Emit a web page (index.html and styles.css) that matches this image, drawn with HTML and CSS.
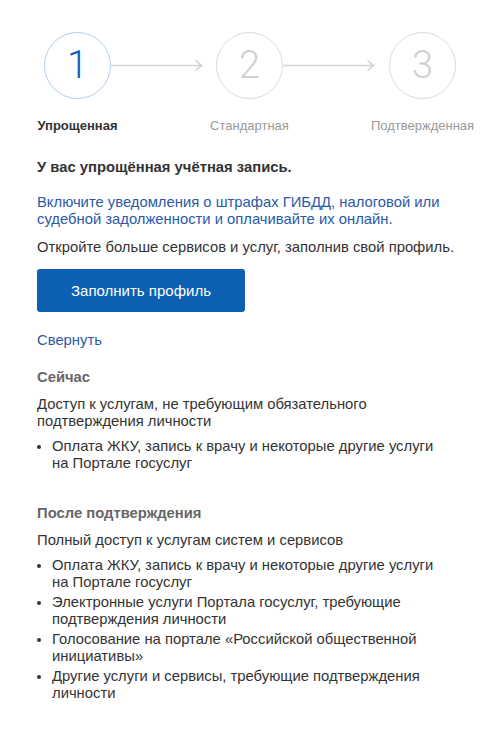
FILE: index.html
```
<!DOCTYPE html>
<html lang="ru">
<head>
    <meta charset="UTF-8">
    <title>Учётная запись</title>
    <link rel="stylesheet" href="styles.css">
</head>
<body>
<section class="wrap">
    <div class="steps">
        <div class="step active">
            <span class="circle">1</span>
            <span class="label">Упрощенная</span>
        </div>
        <svg class="arrow" width="105" height="12" viewBox="0 0 105 12">
            <path d="M0 6.5H90M84.5 1.5L90.5 6.5L84.5 11.5" fill="none" stroke="#d3d3d3" stroke-width="1.6"/>
        </svg>
        <div class="step">
            <span class="circle">2</span>
            <span class="label">Стандартная</span>
        </div>
        <svg class="arrow" width="106" height="12" viewBox="0 0 106 12">
            <path d="M0 6.5H90M84.5 1.5L90.5 6.5L84.5 11.5" fill="none" stroke="#d3d3d3" stroke-width="1.6"/>
        </svg>
        <div class="step">
            <span class="circle">3</span>
            <span class="label">Подтвержденная</span>
        </div>
    </div>

    <div class="content">
        <h2 class="title">У вас упрощённая учётная запись.</h2>
        <p class="notice"><a href="javascript:;">Включите уведомления о штрафах ГИБДД, налоговой или судебной задолженности и оплачивайте их онлайн.</a></p>
        <p class="more">Откройте больше сервисов и услуг, заполнив свой профиль.</p>
        <a href="javascript:;" class="btn">Заполнить профиль</a>
        <a href="javascript:;" class="toggle">Свернуть</a>

        <h3 class="sub">Сейчас</h3>
        <p>Доступ к услугам, не требующим обязательного подтверждения личности</p>
        <ul class="list">
            <li>Оплата ЖКУ, запись к врачу и некоторые другие услуги<br>на Портале госуслуг</li>
        </ul>

        <h3 class="sub later">После подтверждения</h3>
        <p>Полный доступ к услугам систем и сервисов</p>
        <ul class="list">
            <li>Оплата ЖКУ, запись к врачу и некоторые другие услуги<br>на Портале госуслуг</li>
            <li>Электронные услуги Портала госуслуг, требующие подтверждения личности</li>
            <li>Голосование на портале «Российской общественной инициативы»</li>
            <li>Другие услуги и сервисы, требующие подтверждения личности</li>
        </ul>
    </div>
</section>
</body>
</html>
```

FILE: styles.css
```
html,body{ height:100%; }
body,h2,h3,p,ul{ margin:0; padding:0; }
body{
    background:#fff;
    color:#333;
    font-family:"Liberation Sans", Arial, sans-serif;
    font-size:14.8px;
    line-height:17px;
}
a{ color:#2b59a9; text-decoration:none; }

/* шаги */
.steps{
    display:flex;
    align-items:flex-start;
    padding:32px 0 0 44px;
}
.steps .step{
    width:67px;
    display:flex;
    flex-direction:column;
    align-items:center;
}
.steps .circle{
    box-sizing:border-box;
    width:67px;
    height:67px;
    border:1px solid #dcdcdc;
    border-radius:50%;
    display:flex;
    align-items:center;
    justify-content:center;
    font-family:Roboto, "Liberation Sans", sans-serif;
    font-weight:300;
    font-size:38px;
    color:#d0d0d0;
}
.steps .label{
    margin-top:19px;
    white-space:nowrap;
    font-size:13px;
    line-height:16px;
    color:#999;
}
.steps .active .circle{
    border-color:#b3cfe9;
    color:#0d5eb0;
}
.steps .active .label{
    color:#333;
    font-weight:bold;
}
.steps .arrow{
    flex:none;
    margin-top:27px;
}

/* текст */
.content{
    width:421px;
    padding:25px 0 40px 37px;
}
.content .title{
    font-size:14.8px;
    font-weight:bold;
    line-height:17px;
}
.content .notice{ margin-top:18px; }
.content .more{ margin-top:11px; }
.content .btn{
    display:flex;
    align-items:center;
    justify-content:center;
    width:208px;
    height:43px;
    margin-top:13px;
    border-radius:3px;
    background:#0d5fb1;
    color:#fff;
    font-size:15px;
}
.content .toggle{
    display:block;
    width:max-content;
    margin:20px 0 20px;
}
.content .sub{
    font-size:14.8px;
    font-weight:bold;
    line-height:17px;
    color:#666;
    margin-bottom:10px;
}
.content .sub.later{ margin-top:33px; }
.content .list{
    margin-top:8px;
    padding-left:15px;
}
.content .list li{ margin-bottom:3px; }
```
